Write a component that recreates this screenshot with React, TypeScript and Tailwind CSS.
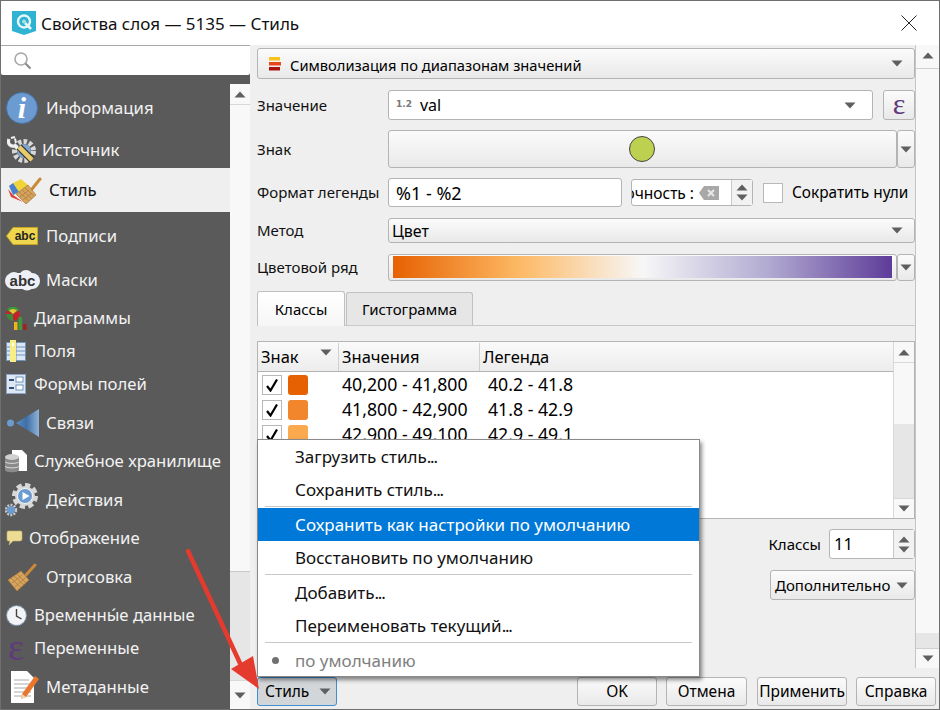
import React from "react";

const Down = ({ className = "" }: { className?: string }) => (
  <svg width="12" height="7" viewBox="0 0 12 7" className={className}><path d="M0.5 0.5H11.5L6 6.5Z" fill="#5f5f5f" /></svg>
);
const Up = ({ className = "" }: { className?: string }) => (
  <svg width="12" height="7" viewBox="0 0 12 7" className={className}><path d="M0.5 6.5H11.5L6 0.5Z" fill="#5f5f5f" /></svg>
);

const Qgis = () => (
  <svg width="24" height="24" viewBox="0 0 24 24">
    <path d="M0 0H24V20L12 24L0 20Z" fill="#2fb3d3" />
    <circle cx="12" cy="10.5" r="6" fill="none" stroke="#e8f7fb" strokeWidth="2.4" />
    <path d="M13 12L19 18" stroke="#e8f7fb" strokeWidth="2.6" />
    <circle cx="12" cy="10.5" r="2" fill="#a8dfe9" />
  </svg>
);
const Info = () => (
  <svg width="32" height="32" viewBox="0 0 32 32">
    <circle cx="16" cy="16" r="15.5" fill="#6c9bd2" stroke="#4a76ab" />
    <text x="16" y="26" textAnchor="middle" fontFamily="Liberation Serif" fontStyle="italic" fontWeight="bold" fontSize="30" fill="#fff">i</text>
  </svg>
);
const Tools = () => (
  <svg width="30" height="28" viewBox="0 0 30 28">
    <circle cx="17" cy="15" r="9.5" fill="none" stroke="#d8d8d8" strokeWidth="5" strokeDasharray="3.5 2" />
    <circle cx="17" cy="15" r="7" fill="#7fa3cc" />
    <path d="M2 3C0 8 4 11 8 10L13 15" stroke="#f0f0f0" strokeWidth="3.2" fill="none" />
    <path d="M4 2L8 1M8 2.5L9 7" stroke="#f0f0f0" strokeWidth="2" />
    <path d="M12 11L25 24" stroke="#333" strokeWidth="7" />
    <path d="M12 11L25 24" stroke="#e6cc6c" strokeWidth="4.6" />
  </svg>
);
const StyleBrush = () => (
  <svg width="34" height="27" viewBox="0 0 34 27">
    <path d="M5 6L13 2L21 9L11 15Z" fill="#f0d438" />
    <path d="M1 9L5 6L11 15L5 18Z" fill="#4b7fcb" />
    <path d="M0 12L5 18L15 25L3 20Z" fill="#e0403a" />
    <path d="M24 12L32 2" stroke="#c98a3a" strokeWidth="3" strokeLinecap="round" />
    <path d="M8 17L20 8L28 18L18 27Z" fill="#d7a45f" stroke="#a97a3a" strokeWidth="0.7" />
    <path d="M11 15L21 24M14 13L24 22M17 11L26 19M12 20L21 13M15 23L24 16" stroke="#a97a3a" strokeWidth="0.7" />
  </svg>
);
const PaintBrush = () => (
  <svg width="29" height="29" viewBox="0 0 29 29">
    <path d="M18 12L27 2" stroke="#c98a3a" strokeWidth="3" strokeLinecap="round" />
    <path d="M0 17L13 8L21 17L9 28Z" fill="#d7a45f" stroke="#a97a3a" strokeWidth="0.7" />
    <path d="M3 15L13 25M6 13L16 22M9 11L18 20M4 20L14 12M7 24L17 15" stroke="#a97a3a" strokeWidth="0.7" />
  </svg>
);
const Label = () => (
  <svg width="32" height="18" viewBox="0 0 32 18">
    <path d="M7 0.5H31.5V17.5H7L0.5 9Z" fill="#eed74f" stroke="#c9a622" />
    <text x="19" y="13" textAnchor="middle" fontFamily="Liberation Sans" fontWeight="bold" fontSize="12" fill="#222">abc</text>
  </svg>
);
const Mask = () => (
  <svg width="35" height="21" viewBox="0 0 35 21">
    <rect x="0" y="3" width="35" height="16" rx="8" fill="#eef0f8" />
    <circle cx="21" cy="7" r="7" fill="#eef0f8" />
    <circle cx="9" cy="9" r="7" fill="#eef0f8" />
    <circle cx="22" cy="13" r="7.5" fill="#eef0f8" />
    <text x="17.5" y="16" textAnchor="middle" fontFamily="Liberation Sans" fontWeight="bold" fontSize="15" fill="#333">abc</text>
  </svg>
);
const Diagram = () => (
  <svg width="21" height="23" viewBox="0 0 21 23">
    <circle cx="7" cy="7" r="6.8" fill="#c8202a" />
    <path d="M7 7L1 3A7 7 0 0 1 13 3Z" fill="#3c9a3c" />
    <path d="M7 7L3 3.5A6 6 0 0 1 11 3.5Z" fill="#e8c530" />
    <path d="M7 7V14A7 7 0 0 1 0.2 7Z" fill="#3c8a3c" />
    <rect x="8" y="15" width="3.5" height="8" fill="#f0b418" />
    <rect x="12.5" y="10" width="3.5" height="13" fill="#3c9a3c" />
    <rect x="17" y="17" width="3.5" height="6" fill="#a81e1e" />
  </svg>
);
const Fields = () => (
  <svg width="20" height="22" viewBox="0 0 20 22">
    <rect x="0.5" y="2.5" width="19" height="18" fill="#dde7f3" stroke="#6f93bd" />
    <path d="M1 7H19M1 11H19M1 15H19M10 3V20" stroke="#6f93bd" />
    <rect x="4" y="0" width="6" height="22" fill="#f8ee88" />
    <rect x="6" y="3" width="2" height="3" fill="#fff" />
  </svg>
);
const Forms = () => (
  <svg width="20" height="20" viewBox="0 0 20 20">
    <rect x="0.5" y="0.5" width="19" height="19" fill="#dfe7f2" stroke="#8aa5c6" />
    <path d="M3 6H8M3 14H8" stroke="#34507a" strokeWidth="2" />
    <rect x="10" y="3" width="7" height="5" fill="#fff" stroke="#6f93bd" />
    <rect x="10" y="11" width="7" height="5" fill="#fff" stroke="#6f93bd" />
  </svg>
);
const Links = () => (
  <svg width="34" height="30" viewBox="0 0 34 30">
    <defs><linearGradient id="lk" x1="0" x2="1"><stop offset="0" stopColor="#5a8fc7" /><stop offset="0.45" stopColor="#3f6fa6" /><stop offset="1" stopColor="#8fb3d8" /></linearGradient></defs>
    <circle cx="3.5" cy="15" r="3.5" fill="#6c9bd2" />
    <path d="M9 15L32 1V29Z" fill="url(#lk)" />
  </svg>
);
const Storage = () => (
  <svg width="22" height="23" viewBox="0 0 22 23">
    <path d="M7 0H17L22 5V21H7Z" fill="#fff" />
    <path d="M0 7V20C0 23 14 23 14 20V7Z" fill="#8a8a8a" />
    <ellipse cx="7" cy="7" rx="7" ry="3" fill="#d0d0d0" />
    <path d="M0 11.5C0 14 14 14 14 11.5M0 16C0 18.5 14 18.5 14 16" stroke="#dedede" fill="none" />
  </svg>
);
const Actions = () => (
  <svg width="36" height="36" viewBox="0 0 36 36">
    <circle cx="21" cy="14" r="10.5" fill="none" stroke="#d8d8d8" strokeWidth="5" strokeDasharray="5 3.2" />
    <circle cx="21" cy="14" r="10" fill="#d8d8d8" />
    <circle cx="21" cy="14" r="7.5" fill="#6c9bd2" stroke="#f4f4f4" />
    <path d="M18.5 10L25.5 14L18.5 18Z" fill="#fff" />
    <circle cx="7" cy="28" r="5" fill="none" stroke="#c8c8c8" strokeWidth="2.4" strokeDasharray="2 1.2" />
    <circle cx="7" cy="28" r="4" fill="#6c9bd2" />
  </svg>
);
const Bubble = () => (
  <svg width="17" height="17" viewBox="0 0 17 17">
    <path d="M2 1H15Q16 1 16 3V9Q16 11 14 11H7L3 15L4 11H2Q1 11 1 9V3Q1 1 2 1Z" fill="#ecdc94" stroke="#c8b568" strokeWidth="0.6" />
  </svg>
);
const Clock = () => (
  <svg width="21" height="21" viewBox="0 0 21 21">
    <circle cx="10.5" cy="10.5" r="9.8" fill="#f2f4f8" stroke="#8fa6c6" strokeWidth="1.2" strokeDasharray="1.5 1" />
    <path d="M10.5 4V11L15.5 14" stroke="#444" strokeWidth="1.4" fill="none" />
  </svg>
);
const Eps = ({ size = "text-[30px]" }: { size?: string }) => (
  <span className={`-mt-[3px] font-['Liberation_Serif',serif] leading-none text-[#5f3a7c] ${size}`}>ε</span>
);
const Meta = () => (
  <svg width="30" height="34" viewBox="0 0 30 34">
    <path d="M1 1H17L24 8V33H1Z" fill="#fff" />
    <path d="M4 10H19M4 14H21M4 18H21M4 22H21M4 26H21" stroke="#aaa" />
    <path d="M12 24L25 6L29 9L16 27L11 29Z" fill="#e8762d" />
    <path d="M12 24L11 29L16 27Z" fill="#f2d8b0" />
  </svg>
);
const SymbolIcon = () => (
  <svg width="14" height="15" viewBox="0 0 14 15">
    <rect x="1" y="1" width="11" height="3.5" fill="#f8c21c" />
    <rect x="1" y="6" width="12" height="3.5" fill="#e8481e" />
    <rect x="1" y="11" width="11" height="3.5" fill="#a8140e" />
  </svg>
);
const Search = () => (
  <svg width="20" height="20" viewBox="0 0 20 20">
    <circle cx="8" cy="8" r="6" fill="none" stroke="#a8a8a8" strokeWidth="1.6" />
    <path d="M12.5 12.5L17.5 17.5" stroke="#8c8c8c" strokeWidth="2.2" />
  </svg>
);

const nav: { t: string; icon: React.ReactNode; h: string; iw: string; active?: boolean }[] = [
  { t: "Информация", icon: <Info />, h: "h-[48px]", iw: "w-[45px] pl-[5px]" },
  { t: "Источник", icon: <Tools />, h: "h-[36px]", iw: "w-[41px] pl-[6px]" },
  { t: "Стиль", icon: <StyleBrush />, h: "h-[44px]", iw: "w-[48px] pl-[7px]", active: true },
  { t: "Подписи", icon: <Label />, h: "h-[48px]", iw: "w-[45px] pl-[5px]" },
  { t: "Маски", icon: <Mask />, h: "h-[40px]", iw: "w-[45px] pl-[4px]" },
  { t: "Диаграммы", icon: <Diagram />, h: "h-[36px]", iw: "w-[33px] pl-[5px]" },
  { t: "Поля", icon: <Fields />, h: "h-[30px]", iw: "w-[33px] pl-[5px]" },
  { t: "Формы полей", icon: <Forms />, h: "h-[36px]", iw: "w-[33px] pl-[5px]" },
  { t: "Связи", icon: <Links />, h: "h-[42px]", iw: "w-[45px] pl-[6px]" },
  { t: "Служебное хранилище", icon: <Storage />, h: "h-[34px]", iw: "w-[33px] pl-[4px]" },
  { t: "Действия", icon: <Actions />, h: "h-[44px]", iw: "w-[45px] pl-[3px]" },
  { t: "Отображение", icon: <Bubble />, h: "h-[32px]", iw: "w-[28px] pl-[5px]" },
  { t: "Отрисовка", icon: <PaintBrush />, h: "h-[46px]", iw: "w-[45px] pl-[7px]" },
  { t: "Временны́е данные", icon: <Clock />, h: "h-[30px]", iw: "w-[33px] pl-[5px]" },
  { t: "Переменные", icon: <Eps size="text-[38px]" />, h: "h-[36px]", iw: "w-[33px] pl-[7px]" },
  { t: "Метаданные", icon: <Meta />, h: "h-[42px]", iw: "w-[45px] pl-[9px]" },
];

const btn = "rounded-[3px] border border-[#b4b4b4] bg-linear-to-b from-[#fbfbfb] to-[#e9e9e9]";

const Label2 = ({ children }: { children: React.ReactNode }) => (
  <div className="w-[131px] shrink-0 text-[15px] text-[#111]">{children}</div>
);

const Swatch = ({ c }: { c: string }) => (
  <div className={`h-[20px] w-[20px] rounded-[3px] ${c}`} />
);
const Check = () => (
  <div className="flex h-[20px] w-[20px] items-center justify-center border border-[#b8b8b8] bg-white">
    <svg width="14" height="14" viewBox="0 0 14 14"><path d="M2 8L5.5 12.5L12 1.5" stroke="#000" strokeWidth="2.2" fill="none" /></svg>
  </div>
);

const rows = [
  { c: "bg-[#e66101]", a: "40,200 - 41,800", b: "40.2 - 41.8" },
  { c: "bg-[#f2862c]", a: "41,800 - 42,900", b: "41.8 - 42.9" },
  { c: "bg-[#fba94f]", a: "42,900 - 49,100", b: "42.9 - 49.1" },
];

const Dots = () => <span className="tracking-[-1.2px]">...</span>;

const MenuItem = ({ children, sel }: { children: React.ReactNode; sel?: boolean }) => (
  <div className={`flex h-[33px] shrink-0 items-center pl-[37px] text-[17px] ${sel ? "bg-[#0078d7] text-white" : "text-[#111]"}`}>{children}</div>
);

export default function App() {
  return (
    <div className="relative flex h-[710px] w-[940px] flex-col overflow-hidden border border-[#6f6f6f] bg-[#efefef] font-['Noto_Sans','Open_Sans',sans-serif] text-[15px]">
      {/* title bar */}
      <div className="flex h-[44px] shrink-0 items-center bg-white pl-[11px] pr-[22px]">
        <Qgis />
        <div className="ml-[5px] flex-1 pt-[2px] text-[17px] text-[#111]">Свойства слоя — 5135 — Стиль</div>
        <svg width="16" height="16" viewBox="0 0 16 16"><path d="M0.5 0.5L15.5 15.5M15.5 0.5L0.5 15.5" stroke="#222" strokeWidth="1" /></svg>
      </div>

      <div className="flex min-h-0 flex-1">
        {/* left column */}
        <div className="flex w-[249px] shrink-0 flex-col bg-[#5a5a5a]">
          <div className="flex h-[30px] shrink-0 items-center rounded-b-[2px] border-t border-[#a8a8a8] bg-white pl-[12px]"><Search /></div>
          <div className="flex min-h-0 flex-1 pt-[9px]">
            <div className="w-[229px] shrink-0">
              {nav.map((n) => (
                <div key={n.t} className={`flex items-center ${n.h} ${n.active ? "bg-[#efefef] text-[#111]" : "text-[#f2f2f2]"}`}>
                  <div className={`flex shrink-0 items-center ${n.iw}`}>{n.icon}</div>
                  <span className="whitespace-nowrap text-[16.7px]">{n.t}</span>
                </div>
              ))}
            </div>
            <div className="flex flex-1 flex-col bg-[#f8f8f8]">
              <div className="flex h-[21px] items-center justify-center border-b border-[#d8d8d8]"><Up /></div>
              <div className="flex-1" />
              <div className="h-[109px] border-t border-[#c8c8c8] bg-[#e6e6e6]" />
              <div className="flex h-[29px] items-center justify-center border-t border-[#d8d8d8]"><Down /></div>
            </div>
          </div>
        </div>

        {/* right column */}
        <div className="flex min-w-0 flex-1 flex-col">
          <div className="flex h-[623px] shrink-0">
            <div className="flex w-[665px] shrink-0 flex-col pl-[7px] pt-[3px]">
              <div className={`flex h-[31px] items-center justify-between pl-[10px] pr-[11px] ${btn}`}>
                <div className="flex items-center gap-[8px]"><SymbolIcon /><span className="pt-[3px] text-[14.7px]">Символизация по диапазонам значений</span></div>
                <Down />
              </div>

              <div className="mt-[11px] flex h-[30px] items-center">
                <Label2>Значение</Label2>
                <div className="flex h-[30px] w-[485px] items-center justify-between rounded-[3px] border border-[#b4b4b4] bg-white pl-[7px] pr-[16px]">
                  <div className="flex items-center gap-[8px]"><span className="font-['DejaVu_Sans',sans-serif] text-[9px] font-bold text-[#777]">1.2</span><span className="text-[16px]">val</span></div>
                  <Down />
                </div>
                <div className={`ml-[10px] flex h-[30px] w-[32px] items-center justify-center ${btn}`}><Eps /></div>
              </div>

              <div className="mt-[10px] flex h-[38px] items-center">
                <Label2>Знак</Label2>
                <div className={`flex h-[38px] w-[509px] items-center justify-center ${btn}`}>
                  <div className="-ml-px h-[26px] w-[26px] rounded-full border border-[#444] bg-[#bed04f]" />
                </div>
                <div className={`flex h-[38px] w-[18px] items-center justify-center ${btn}`}><Down /></div>
              </div>

              <div className="mt-[10px] flex h-[29px] items-center">
                <Label2>Формат легенды</Label2>
                <div className="flex h-[29px] w-[234px] items-center rounded-[3px] border border-[#b4b4b4] bg-white pl-[7px] pt-[2px] text-[18px]">%1 - %2</div>
                <div className="ml-[9px] flex h-[27px] w-[122px] items-stretch rounded-[3px] border border-[#b4b4b4] bg-white">
                  <div className="flex min-w-0 flex-1 items-center overflow-hidden whitespace-nowrap text-[15.5px]">
                    <div className="flex w-[62px] shrink-0 justify-end overflow-hidden pt-[2px]"><span className="shrink-0">точность :</span></div>
                    <svg width="20" height="14" viewBox="0 0 20 14" className="ml-[5px] shrink-0"><path d="M5 0H20V14H5L0 7Z" fill="#a8a8a8" /><path d="M9 4L15 10M15 4L9 10" stroke="#e8e8e8" strokeWidth="2" /></svg>
                  </div>
                  <div className="flex w-[21px] flex-col items-center justify-center gap-[3px] border-l border-[#c8c8c8] bg-[#f2f2f2]"><Up /><Down /></div>
                </div>
                <div className="ml-[10px] h-[20px] w-[20px] border border-[#b8b8b8] bg-white" />
                <span className="ml-[9px] whitespace-nowrap pt-px text-[15.4px]">Сократить нули</span>
              </div>

              <div className="mt-[11px] flex h-[25px] items-center">
                <Label2>Метод</Label2>
                <div className={`flex h-[25px] w-[527px] items-center justify-between pl-[3px] pr-[11px] ${btn}`}><span className="text-[16px]">Цвет</span><Down /></div>
              </div>

              <div className="mt-[11px] flex h-[26px] items-center">
                <Label2>Цветовой ряд</Label2>
                <div className={`flex h-[27px] w-[509px] items-center p-[3px] pl-[4px] pr-[4px] ${btn}`}>
                  <div className="h-[22px] w-full bg-[linear-gradient(to_right,#e66101,#fdb863_25%,#f7f7f7_50%,#b2abd2_75%,#5e3c99)]" />
                </div>
                <div className={`flex h-[27px] w-[18px] items-center justify-center ${btn}`}><Down /></div>
              </div>

              {/* tabs */}
              <div className="mt-[11px] flex h-[35px] items-end border-b border-[#c8c8c8]">
                <div className="z-10 -mb-px flex h-[35px] w-[88px] items-center justify-center rounded-t-[3px] border border-b-0 border-[#c0c0c0] bg-linear-to-b from-[#ffffff] to-[#f6f6f6] text-[15px]">Классы</div>
                <div className="ml-px flex h-[33px] w-[127px] items-center justify-center rounded-t-[3px] border border-b-0 border-[#c0c0c0] bg-[#e6e6e6] text-[15px]">Гистограмма</div>
              </div>

              {/* table */}
              <div className="mt-[15px] flex h-[178px] border border-[#b4b4b4] bg-white">
                <div className="min-w-0 flex-1">
                  <div className="flex h-[30px] items-stretch border-b border-[#b4b4b4] bg-linear-to-b from-[#fafafa] to-[#ececec] pt-px text-[16.5px]">
                    <div className="relative flex w-[81px] items-center border-r border-[#d0d0d0] pl-[3px]">Знак<Down className="absolute right-[6px] top-[6px]" /></div>
                    <div className="flex w-[141px] items-center border-r border-[#d0d0d0] pl-[3px]">Значения</div>
                    <div className="flex items-center pl-[3px]">Легенда</div>
                  </div>
                  <div>
                    {rows.map((r) => (
                      <div key={r.a} className="flex h-[25px] items-center">
                        <div className="ml-[4px]"><Check /></div>
                        <div className="ml-[6px]"><Swatch c={r.c} /></div>
                        <div className="ml-[34px] w-[146px] text-[17.7px]">{r.a}</div>
                        <div className="text-[17.7px]">{r.b}</div>
                      </div>
                    ))}
                  </div>
                </div>
                <div className="flex w-[21px] shrink-0 flex-col border-l border-[#d8d8d8] bg-[#f8f8f8]">
                  <div className="flex h-[21px] items-center justify-center border-b border-[#d8d8d8]"><Up /></div>
                  <div className="h-[61px]" />
                  <div className="h-[74px] bg-[#e6e6e6]" />
                  <div className="flex flex-1 items-center justify-center border-t border-[#d8d8d8]"><Down /></div>
                </div>
              </div>

              <div className="mt-[10px] flex h-[30px] items-center justify-end">
                <span className="mr-[8px] text-[15px]">Классы</span>
                <div className="flex h-[30px] w-[86px] items-stretch rounded-[3px] border border-[#b4b4b4] bg-white">
                  <div className="flex flex-1 items-center pl-[4px] text-[16.5px]">11</div>
                  <div className="flex w-[21px] flex-col items-center justify-center gap-[3px] border-l border-[#c8c8c8] bg-[#f2f2f2]"><Up /><Down /></div>
                </div>
              </div>
              <div className="mt-[11px] flex justify-end">
                <div className={`flex h-[30px] w-[145px] items-center justify-between pl-[4px] pr-[6px] text-[15px] ${btn}`}>Дополнительно<Down /></div>
              </div>
            </div>

            {/* outer scrollbar */}
            <div className="flex flex-1 flex-col border-l border-[#c4c4c4] bg-[#f8f8f8]">
              <div className="flex h-[24px] items-center justify-center border-b border-[#d0d0d0]"><Up className="mb-[2px]" /></div>
              <div className="flex-1" />
              <div className="h-[15px] bg-[#e6e6e6]" />
              <div className="flex h-[20px] items-center justify-center border-t border-[#d0d0d0]"><Down /></div>
            </div>
          </div>

          {/* bottom buttons */}
          <div className="flex shrink-0 items-start pl-[7px] pr-[3px] pt-[9px]">
            <div className="flex h-[29px] w-[80px] items-center justify-between rounded-[3px] border border-[#3f8fd4] bg-[#d3d6d9] pl-[7px] pr-[5px] text-[15.5px]">Стиль<Down /></div>
            <div className="flex-1" />
            <div className={`flex h-[29px] w-[80px] items-center justify-center text-[15.5px] ${btn}`}>OK</div>
            <div className={`ml-[9px] flex h-[29px] w-[81px] items-center justify-center text-[15.5px] ${btn}`}>Отмена</div>
            <div className={`ml-[10px] flex h-[29px] w-[90px] items-center justify-center text-[15.5px] ${btn}`}>Применить</div>
            <div className={`ml-[9px] flex h-[29px] w-[80px] items-center justify-center text-[15.5px] ${btn}`}>Справка</div>
          </div>
        </div>
      </div>

      {/* popup menu */}
      <div className="absolute left-[256px] top-[438px] flex h-[238px] w-[443px] flex-col border border-[#8a8a8a] bg-white shadow-[2px_3px_4px_rgba(0,0,0,0.45)]">
        <MenuItem>Загрузить стиль<Dots /></MenuItem>
        <MenuItem>Сохранить стиль<Dots /></MenuItem>
        <div className="mx-[7px] mb-px h-px shrink-0 bg-[#c8c8c8]" />
        <MenuItem sel>Сохранить как настройки по умолчанию</MenuItem>
        <MenuItem>Восстановить по умолчанию</MenuItem>
        <div className="mx-[7px] mb-px h-px shrink-0 bg-[#c8c8c8]" />
        <MenuItem>Добавить<Dots /></MenuItem>
        <MenuItem>Переименовать текущий<Dots /></MenuItem>
        <div className="mx-[7px] mb-px h-px shrink-0 bg-[#c8c8c8]" />
        <div className="relative flex h-[32px] shrink-0 items-center pl-[37px] pt-px text-[17px] text-[#808080]">
          <span className="absolute left-[14px] top-[13px] h-[7px] w-[7px] rounded-full bg-[#707070]" />
          по умолчанию
        </div>
      </div>

      {/* annotation arrow */}
      <svg width="90" height="150" viewBox="0 0 90 150" className="absolute left-[179px] top-[545px]">
        <path d="M8 5L65 128" stroke="#e53a2e" strokeWidth="4.5" strokeLinecap="round" />
        <path d="M79 143L51 123L73 110Z" fill="#e53a2e" />
      </svg>
    </div>
  );
}
